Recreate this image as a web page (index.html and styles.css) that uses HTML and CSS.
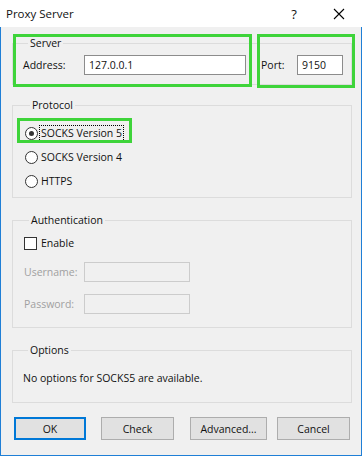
FILE: index.html
```html
<!DOCTYPE html>
<html lang="en">
<head>
    <meta charset="UTF-8">
    <meta name="viewport" content="width=device-width, initial-scale=1.0">
    <title>Proxy Server</title>
    <link rel="stylesheet" href="styles.css">
</head>
<body>

    <div class="window">
        <div class="titlebar">
            <span class="title">Proxy Server</span>
            <span class="help">?</span>
            <span class="close">
                <svg width="12" height="12" viewBox="0 0 12 12">
                    <path d="M1 1 L11 11 M11 1 L1 11" stroke="#000" stroke-width="1.1" fill="none"/>
                </svg>
            </span>
        </div>

        <div class="content">
            <fieldset class="group group-server">
                <legend>Server</legend>
                <div class="server-row">
                    <label class="label-address" for="address">Address:</label>
                    <input class="field field-address" type="text" id="address" value="127.0.0.1">
                    <label class="label-port" for="port">Port:</label>
                    <input class="field field-port" type="text" id="port" value="9150">
                </div>
            </fieldset>

            <fieldset class="group group-protocol">
                <legend>Protocol</legend>
                <div class="option">
                    <span class="radio checked"></span>
                    <span class="option-text focused">SOCKS Version 5</span>
                </div>
                <div class="option">
                    <span class="radio"></span>
                    <span class="option-text">SOCKS Version 4</span>
                </div>
                <div class="option">
                    <span class="radio"></span>
                    <span class="option-text">HTTPS</span>
                </div>
            </fieldset>

            <fieldset class="group group-auth">
                <legend>Authentication</legend>
                <div class="option option-check">
                    <span class="checkbox"></span>
                    <span class="option-text">Enable</span>
                </div>
                <div class="auth-row">
                    <label class="label-disabled">Username:</label>
                    <span class="field field-disabled"></span>
                </div>
                <div class="auth-row auth-row-last">
                    <label class="label-disabled">Password:</label>
                    <span class="field field-disabled"></span>
                </div>
            </fieldset>

            <fieldset class="group group-options">
                <legend>Options</legend>
                <p class="options-text">No options for SOCKS5 are available.</p>
            </fieldset>

            <div class="buttons">
                <button class="btn btn-ok">OK</button>
                <button class="btn btn-check">Check</button>
                <button class="btn btn-advanced">Advanced...</button>
                <button class="btn btn-cancel">Cancel</button>
            </div>
        </div>

        <!-- green highlight boxes drawn over the dialog -->
        <div class="mark mark-server"></div>
        <div class="mark mark-port"></div>
        <div class="mark mark-radio"></div>
    </div>

</body>
</html>
```

FILE: styles.css
```css
/* General Body Styles */
body {
    margin: 0;
    font-family: 'Open Sans', 'Noto Sans', sans-serif;
    font-size: 10.5px;
    color: #111;
    background: #f0f0f0;
}

/* Dialog window */
.window {
    position: relative;
    width: 362px;
    height: 456px;
    box-sizing: border-box;
    background: #f0f0f0;
    border: 1px solid #1f7fd6;
    border-top: none;
}

/* Title bar */
.titlebar {
    height: 27px;
    background: #fff;
    display: flex;
    align-items: center;
    margin-left: -1px;
    margin-right: -1px;
    padding-left: 6px;
}

.title {
    font-size: 11.5px;
    flex: 1;
}

.help {
    font-size: 13px;
    width: 46px;
    text-align: center;
    margin-right: -1px;
}

.close {
    width: 46px;
    display: flex;
    justify-content: center;
    margin-top: 1px;
}

/* Content area */
.content {
    padding-left: 11px;
}

/* Group boxes */
.group {
    width: 340px;
    box-sizing: border-box;
    margin: 0;
    padding: 0;
    border: 1px solid #dcdcdc;
}

.group legend {
    margin-left: 5px;
    padding: 0 2px;
    line-height: 16px;
}

.group-server {
    margin-top: 8px;
    padding: 4px 0 9px 10px;
}

.server-row {
    display: flex;
    align-items: center;
    height: 20px;
}

.label-address {
    width: 61px;
}

.label-port {
    width: 36px;
    margin-left: 15px;
}

.field {
    box-sizing: border-box;
    height: 20px;
    margin: 0;
    padding: 0 4px;
    border: 1px solid #8c8c8c;
    background: #fff;
    font-family: inherit;
    font-size: 10.5px;
    color: #111;
    outline: none;
}

.field-address {
    width: 162px;
}

.field-port {
    width: 46px;
}

/* Protocol */
.group-protocol {
    margin-top: 12px;
    padding: 8px 0 4px 12px;
}

.option {
    display: flex;
    align-items: center;
    height: 24px;
}

.radio {
    width: 13px;
    height: 13px;
    box-sizing: border-box;
    border: 1px solid #333;
    border-radius: 50%;
    background: #fff;
    position: relative;
    margin-right: 1px;
}

.radio.checked::after {
    content: "";
    position: absolute;
    left: 3px;
    top: 3px;
    width: 5px;
    height: 5px;
    border-radius: 50%;
    background: #333;
}

.option-text {
    padding: 0 1px;
    line-height: 15px;
    border: 1px solid transparent;
}

.option-text.focused {
    border: 1px dotted #000;
}

/* Authentication */
.group-auth {
    margin-top: 14px;
    padding: 4px 0 13px 11px;
}

.option-check {
    height: 22px;
}

.checkbox {
    width: 13px;
    height: 13px;
    box-sizing: border-box;
    border: 1px solid #333;
    background: #fff;
    margin-right: 2px;
}

.auth-row {
    display: flex;
    align-items: center;
    margin-top: 8px;
}

.auth-row-last {
    margin-top: 12px;
}

.label-disabled {
    width: 60px;
    color: #a0a0a0;
}

.field-disabled {
    width: 106px;
    background: #f0f0f0;
    border-color: #cccccc;
}

/* Options */
.group-options {
    margin-top: 14px;
    padding: 12px 0 16px 10px;
}

.options-text {
    margin: 0;
    line-height: 16px;
}

/* Button Styles */
.buttons {
    display: flex;
    margin-top: 14px;
    padding-left: 2px;
}

.btn {
    height: 23px;
    box-sizing: border-box;
    background: #e1e1e1;
    border: 1px solid #adadad;
    font-family: inherit;
    font-size: 10.5px;
    color: #111;
    padding: 0;
}

.btn-ok {
    width: 72px;
    border: 2px solid #0078d7;
}

.btn-check {
    width: 73px;
    margin-left: 15px;
}

.btn-advanced {
    width: 77px;
    margin-left: 16px;
}

.btn-cancel {
    width: 73px;
    margin-left: 10px;
}

/* Green highlight marks */
.mark {
    position: absolute;
    box-sizing: border-box;
    border: 3px solid #3ed43a;
}

.mark-server {
    left: 12px;
    top: 34px;
    width: 239px;
    height: 53px;
}

.mark-port {
    left: 256px;
    top: 34px;
    width: 98px;
    height: 54px;
}

.mark-radio {
    left: 16px;
    top: 118px;
    width: 115px;
    height: 25px;
}
```
